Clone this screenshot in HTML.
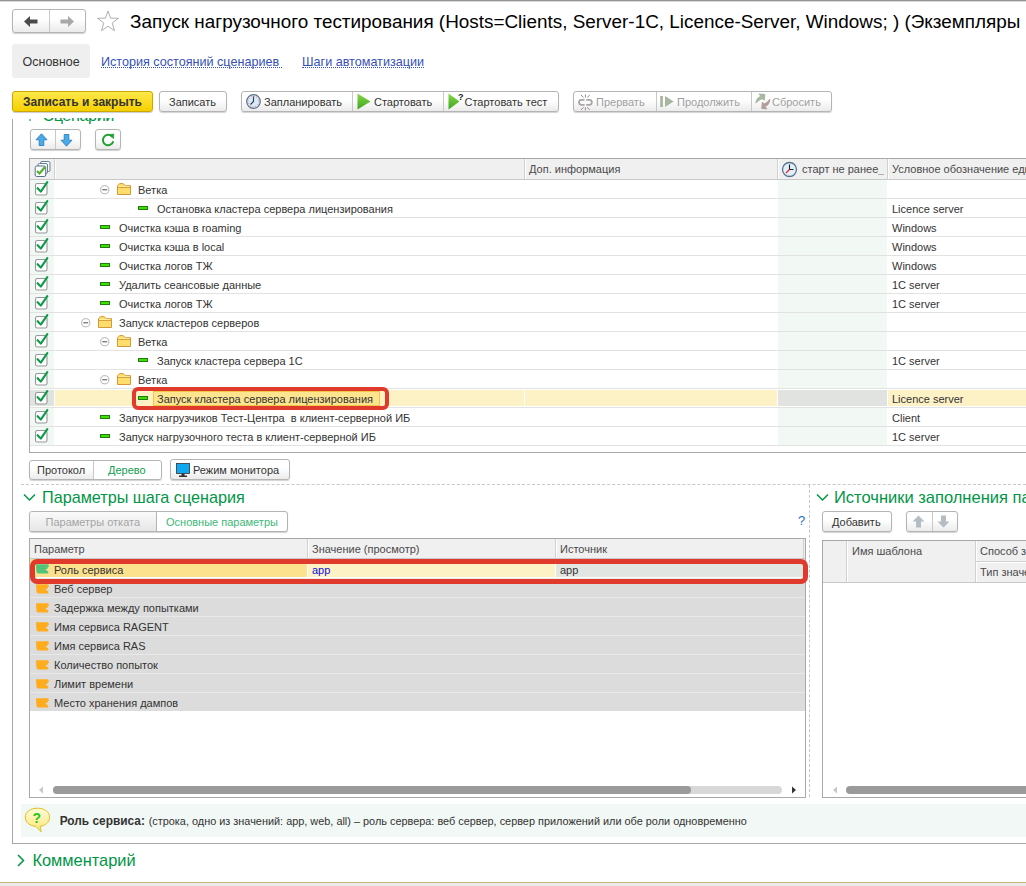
<!DOCTYPE html>
<html><head><meta charset="utf-8">
<style>
*{margin:0;padding:0;box-sizing:border-box}
html,body{width:1026px;height:886px;overflow:hidden;background:#fff;font-family:"Liberation Sans",sans-serif;color:#333}
.a{position:absolute}
.t{position:absolute;white-space:nowrap;line-height:1}
.btn{position:absolute;border:1px solid #b4b4b4;border-radius:3px;background:linear-gradient(#fff 40%,#ebebeb);box-shadow:0 1px 1px rgba(0,0,0,.18)}
.sep{position:absolute;top:0;bottom:0;width:1px;background:#c8c8c8}
.bt{position:absolute;white-space:nowrap;font-size:11px;line-height:1;color:#333}
</style></head><body>
<!-- top border -->
<div class="a" style="left:0;top:0;width:1026px;height:1px;background:#949494"></div><div class="a" style="left:0;top:1px;width:1026px;height:1px;background:#d8d8d8"></div>

<!-- nav buttons -->
<div class="btn" style="left:12px;top:9px;width:74px;height:24px">
  <div class="sep" style="left:36px"></div>
  <svg class="a" style="left:11px;top:6px" width="14" height="11" viewBox="0 0 14 11"><path d="M0 5.5 L6 0 V3.5 H13.5 V7.5 H6 V11 Z" fill="#4a4a4a"/></svg>
  <svg class="a" style="left:47px;top:6px" width="14" height="11" viewBox="0 0 14 11"><path d="M14 5.5 L8 0 V3.5 H0.5 V7.5 H8 V11 Z" fill="#a8a8a8"/></svg>
</div>
<!-- star -->
<svg class="a" style="left:96px;top:10px" width="24" height="22" viewBox="0 0 24 22"><path d="M12 1 L14.6 8.2 L22.5 8.3 L16.2 13 L18.5 20.8 L12 16.2 L5.5 20.8 L7.8 13 L1.5 8.3 L9.4 8.2 Z" fill="none" stroke="#b0b0b0" stroke-width="1"/></svg>
<!-- title -->
<div class="t" style="left:130px;top:12.7px;font-size:18.9px;color:#000">Запуск нагрузочного тестирования (Hosts=Clients, Server-1C, Licence-Server, Windows; ) (Экземпляры</div>

<!-- tabs -->
<div class="a" style="left:12px;top:44px;width:78px;height:34px;background:#efefef;border-radius:3px"></div>
<div class="t" style="left:22.5px;top:55.6px;font-size:12.5px;color:#333">Основное</div>
<div class="t" style="left:101px;top:55.6px;font-size:12.6px;color:#3550b8">История состояний сценариев</div><div class="a" style="left:101px;top:67px;width:181px;height:0;border-top:1px dotted #3550b8"></div>
<div class="t" style="left:302px;top:55.6px;font-size:12.6px;color:#3550b8">Шаги автоматизации</div><div class="a" style="left:302px;top:67px;width:122px;height:0;border-top:1px dotted #3550b8"></div>


<!-- toolbar -->
<div class="a" style="left:12px;top:91px;width:141px;height:21px;border:1px solid #c9a800;border-radius:3px;background:linear-gradient(#ffe94a,#f5cf00);box-shadow:0 1px 1px rgba(0,0,0,.2)"></div>
<div class="t" style="left:23px;top:96.2px;font-size:12px;font-weight:bold;color:#333">Записать и закрыть</div>
<div class="btn" style="left:159px;top:91px;width:68px;height:21px"></div>
<div class="bt" style="left:169px;top:96.5px">Записать</div>

<div class="btn" style="left:241px;top:91px;width:318px;height:21px">
  <div class="sep" style="left:110px"></div>
  <div class="sep" style="left:201px"></div>
</div>
<svg class="a" style="left:246px;top:94px" width="15" height="15" viewBox="0 0 15 15"><circle cx="7.5" cy="7.5" r="6.8" fill="#dbeaf7" stroke="#5b6f86" stroke-width="1.2"/><circle cx="7.5" cy="7.5" r="5.2" fill="none" stroke="#e05050" stroke-width="0.8" stroke-dasharray="0.8 1.9"/><path d="M7.5 2.5 V7.5 L4.5 10.5" stroke="#2a3a5a" stroke-width="1.1" fill="none"/></svg>
<div class="bt" style="left:264px;top:96.5px">Запланировать</div>
<svg class="a" style="left:357px;top:93px" width="14" height="17" viewBox="0 0 14 17"><defs><linearGradient id="pg" x1="0" y1="0" x2="0" y2="1"><stop offset="0" stop-color="#8ad848"/><stop offset="1" stop-color="#3aa520"/></linearGradient></defs><path d="M0.5 0.5 L13.5 8.5 L0.5 16.5 Z" fill="url(#pg)"/></svg>
<div class="bt" style="left:374px;top:96.5px">Стартовать</div>
<svg class="a" style="left:448px;top:93px" width="16" height="17" viewBox="0 0 16 17"><path d="M0.5 0.5 L11.5 8.5 L0.5 16.5 Z" fill="url(#pg)"/><text x="10" y="7" font-family="Liberation Sans" font-size="9" font-weight="bold" fill="#222">?</text></svg>
<div class="bt" style="left:464.5px;top:96.5px">Стартовать тест</div>

<div class="btn" style="left:573px;top:91px;width:259px;height:21px">
  <div class="sep" style="left:82px"></div>
  <div class="sep" style="left:177px"></div>
</div>
<svg class="a" style="left:574px;top:90px" width="26" height="23" viewBox="0 0 26 23"><g fill="none" stroke="#a6a6a6" stroke-width="1.8"><path d="M10.6 9.9 H7.5 A2.45 2.45 0 0 0 7.5 14.8 H10.6"/><path d="M12.3 9.9 H15.4 A2.45 2.45 0 0 1 15.4 14.8 H12.3"/></g><g stroke="#a08a8a" stroke-width="1"><path d="M7 5 L9.5 7.5 M11.4 4.5 V7.5 M15.7 5 L13.3 7.5 M7 20 L9.5 17.3 M11.4 20.3 V17.3 M15.7 20 L13.3 17.3"/></g></svg>
<div class="bt" style="left:596px;top:96.5px;color:#a0a0a0">Прервать</div>
<svg class="a" style="left:656px;top:90px" width="24" height="23" viewBox="0 0 24 23"><rect x="4.2" y="6" width="2.7" height="11" fill="#a9b5a0"/><path d="M9 6 L17.7 11.5 L9 17 Z" fill="#a9b5a0"/></svg>
<div class="bt" style="left:677px;top:96.5px;color:#a0a0a0">Продолжить</div>
<svg class="a" style="left:752px;top:90px" width="22" height="23" viewBox="0 0 22 23"><path d="M4 12.5 Q5.2 7.2 9.6 6.3 L7.3 4.2 L12.7 4.6 L12.2 10 L10.6 8.3 Q7 9.2 4 12.5 Z" fill="#a8b8a0" stroke="#a8b8a0" stroke-width="1.2" stroke-linejoin="round"/><path d="M17.8 9.6 Q17 15.2 12.4 16.3 L14.6 18.6 L9.9 18.3 L10.4 12.5 L12 14.3 Q15.6 13 17.8 9.6 Z" fill="#b29c9c" stroke="#b29c9c" stroke-width="1.2" stroke-linejoin="round"/></svg>
<div class="bt" style="left:772px;top:96.5px;color:#a0a0a0">Сбросить</div>


<div class="a" style="left:12px;top:119px;width:1px;height:725px;background:#a8a8a8"></div>
<div class="a" style="left:12px;top:843px;width:1014px;height:1px;background:#a8a8a8"></div>
<div class="a" style="left:20px;top:118px;width:200px;height:12px;overflow:hidden"><div class="t" style="left:22.4px;top:-11.2px;font-size:16.2px;letter-spacing:-0.4px;color:#009646">Сценарии</div><div class="a" style="left:9px;top:1px;width:2px;height:2px;background:#7cc49c"></div></div>
<div class="btn" style="left:30px;top:129px;width:51px;height:21px"><div class="sep" style="left:24px"></div></div>
<svg class="a" style="left:35px;top:133px" width="13" height="14" viewBox="0 0 13 14"><path d="M6.5 0.8 L12 6.8 H8.8 V12.5 H4.2 V6.8 H1 Z" fill="#4aaae8" stroke="#2b7fc0" stroke-width="0.9" stroke-linejoin="round"/></svg>
<svg class="a" style="left:60px;top:133px" width="13" height="14" viewBox="0 0 13 14"><path d="M6.5 13.2 L12 7.2 H8.8 V1.5 H4.2 V7.2 H1 Z" fill="#4aaae8" stroke="#2b7fc0" stroke-width="0.9" stroke-linejoin="round"/></svg>
<div class="btn" style="left:95px;top:129px;width:26px;height:21px"></div>
<svg class="a" style="left:101px;top:133px" width="14" height="14" viewBox="0 0 14 14"><path d="M11 3.6 A5.2 5.2 0 1 0 12.2 8.2" fill="none" stroke="#22a030" stroke-width="2"/><path d="M8 1.5 L12.8 1 L12.6 5.8 Z" fill="#22a030" stroke="#22a030" stroke-width="0.6" stroke-linejoin="round"/></svg>
<div class="a" style="left:29px;top:158px;width:997px;height:295px;border:1px solid #a8a8a8;border-right:none;background:#fff"></div>
<div class="a" style="left:30px;top:159px;width:996px;height:21px;background:#f0f0f0;border-bottom:1px solid #c8c8c8"></div>
<div class="a" style="left:54px;top:159px;width:1px;height:20px;background:#d0d0d0"></div>
<div class="a" style="left:55px;top:159px;width:1px;height:20px;background:#fff"></div>
<div class="a" style="left:524px;top:159px;width:1px;height:20px;background:#d0d0d0"></div>
<div class="a" style="left:525px;top:159px;width:1px;height:20px;background:#fff"></div>
<div class="a" style="left:777px;top:159px;width:1px;height:20px;background:#d0d0d0"></div>
<div class="a" style="left:778px;top:159px;width:1px;height:20px;background:#fff"></div>
<div class="a" style="left:887px;top:159px;width:1px;height:20px;background:#d0d0d0"></div>
<div class="a" style="left:888px;top:159px;width:1px;height:20px;background:#fff"></div>
<svg class="a" style="left:34px;top:161px" width="17" height="17" viewBox="0 0 17 17"><rect x="6.5" y="0.5" width="9.5" height="10" rx="1.5" fill="#fff" stroke="#56708c" stroke-width="0.9"/><rect x="4" y="2.5" width="9.5" height="10" rx="1.5" fill="#fff" stroke="#56708c" stroke-width="0.9"/><rect x="1.2" y="5" width="10.5" height="10.5" rx="1.5" fill="#fff" stroke="#56708c" stroke-width="1"/><path d="M3 10 L5.5 12.5 L11 6" fill="none" stroke="#50b030" stroke-width="2.2"/></svg>
<div class="t" style="left:529px;top:164.2px;font-size:11px;color:#4a4a4a">Доп. информация</div>
<svg class="a" style="left:781px;top:161px" width="17" height="17" viewBox="0 0 17 17"><circle cx="8.5" cy="8.5" r="7" fill="#e2eef8" stroke="#5a7590" stroke-width="1.3"/><path d="M8.5 3.5 V8.5 H12.5" fill="none" stroke="#222" stroke-width="1.1"/><path d="M8.5 8.5 L5 12" stroke="#e02020" stroke-width="1.1"/></svg>
<div class="t" style="left:802px;top:164.2px;font-size:11px;color:#4a4a4a">старт не ранее</div><div class="a" style="left:878px;top:174px;width:6px;height:1px;background:#b0b0b0"></div>
<div class="t" style="left:892px;top:164.2px;font-size:11px;color:#4a4a4a">Условное обозначение единицы</div>
<div class="a" style="left:30px;top:198px;width:996px;height:1px;background:#e2e2e2"></div>
<div class="a" style="left:30px;top:180px;width:24px;height:18px;background:#f2f8f4"></div>
<div class="a" style="left:778px;top:180px;width:109px;height:18px;background:#f2f8f4"></div>
<svg class="a" style="left:34px;top:181px" width="15" height="15" viewBox="0 0 15 15"><rect x="1.5" y="2.5" width="11.5" height="11.5" rx="1.8" fill="#fff" stroke="#989898" stroke-width="1.1"/><path d="M3.6 7.2 L6.8 10.6 L13.3 1.2" fill="none" stroke="#0c9a48" stroke-width="2.1" stroke-linecap="round" stroke-linejoin="round"/></svg>
<svg class="a" style="left:99.5px;top:185px" width="10" height="10" viewBox="0 0 10 10"><circle cx="4.75" cy="4.75" r="4.1" fill="#fff" stroke="#a8a8a8" stroke-width="0.9"/><path d="M2.3 4.75 H7.2" stroke="#6a6a6a" stroke-width="1.2"/></svg>
<svg class="a" style="left:117px;top:182.5px" width="15" height="13" viewBox="0 0 15 13"><path d="M0.5 2.8 L2.6 0.6 H6.2 L8.2 2.6 H13.5 V11.5 H0.5 Z" fill="#fddd6c" stroke="#d8983a" stroke-width="1" stroke-linejoin="round"/><path d="M0.5 4.4 H13.5" stroke="#d8983a" stroke-width="1"/><path d="M1.5 3.4 H12.5" stroke="#fff0a0" stroke-width="1"/></svg>
<div class="t" style="left:138px;top:184.69px;font-size:11px;color:#333">Ветка</div>
<div class="a" style="left:30px;top:217px;width:996px;height:1px;background:#e2e2e2"></div>
<div class="a" style="left:30px;top:199px;width:24px;height:18px;background:#f2f8f4"></div>
<div class="a" style="left:778px;top:199px;width:109px;height:18px;background:#f2f8f4"></div>
<svg class="a" style="left:34px;top:200px" width="15" height="15" viewBox="0 0 15 15"><rect x="1.5" y="2.5" width="11.5" height="11.5" rx="1.8" fill="#fff" stroke="#989898" stroke-width="1.1"/><path d="M3.6 7.2 L6.8 10.6 L13.3 1.2" fill="none" stroke="#0c9a48" stroke-width="2.1" stroke-linecap="round" stroke-linejoin="round"/></svg>
<div class="a" style="left:138px;top:206px;width:10px;height:4px;background:#3ee000;border:1px solid #1f7a10"></div>
<div class="t" style="left:157px;top:203.69px;font-size:11px;color:#333">Остановка кластера сервера лицензирования</div>
<div class="t" style="left:892px;top:203.69px;font-size:11px;color:#333">Licence server</div>
<div class="a" style="left:30px;top:236px;width:996px;height:1px;background:#e2e2e2"></div>
<div class="a" style="left:30px;top:218px;width:24px;height:18px;background:#f2f8f4"></div>
<div class="a" style="left:778px;top:218px;width:109px;height:18px;background:#f2f8f4"></div>
<svg class="a" style="left:34px;top:219px" width="15" height="15" viewBox="0 0 15 15"><rect x="1.5" y="2.5" width="11.5" height="11.5" rx="1.8" fill="#fff" stroke="#989898" stroke-width="1.1"/><path d="M3.6 7.2 L6.8 10.6 L13.3 1.2" fill="none" stroke="#0c9a48" stroke-width="2.1" stroke-linecap="round" stroke-linejoin="round"/></svg>
<div class="a" style="left:100px;top:225px;width:10px;height:4px;background:#3ee000;border:1px solid #1f7a10"></div>
<div class="t" style="left:119px;top:222.69px;font-size:11px;color:#333">Очистка кэша в roaming</div>
<div class="t" style="left:892px;top:222.69px;font-size:11px;color:#333">Windows</div>
<div class="a" style="left:30px;top:255px;width:996px;height:1px;background:#e2e2e2"></div>
<div class="a" style="left:30px;top:237px;width:24px;height:18px;background:#f2f8f4"></div>
<div class="a" style="left:778px;top:237px;width:109px;height:18px;background:#f2f8f4"></div>
<svg class="a" style="left:34px;top:238px" width="15" height="15" viewBox="0 0 15 15"><rect x="1.5" y="2.5" width="11.5" height="11.5" rx="1.8" fill="#fff" stroke="#989898" stroke-width="1.1"/><path d="M3.6 7.2 L6.8 10.6 L13.3 1.2" fill="none" stroke="#0c9a48" stroke-width="2.1" stroke-linecap="round" stroke-linejoin="round"/></svg>
<div class="a" style="left:100px;top:244px;width:10px;height:4px;background:#3ee000;border:1px solid #1f7a10"></div>
<div class="t" style="left:119px;top:241.69px;font-size:11px;color:#333">Очистка кэша в local</div>
<div class="t" style="left:892px;top:241.69px;font-size:11px;color:#333">Windows</div>
<div class="a" style="left:30px;top:274px;width:996px;height:1px;background:#e2e2e2"></div>
<div class="a" style="left:30px;top:256px;width:24px;height:18px;background:#f2f8f4"></div>
<div class="a" style="left:778px;top:256px;width:109px;height:18px;background:#f2f8f4"></div>
<svg class="a" style="left:34px;top:257px" width="15" height="15" viewBox="0 0 15 15"><rect x="1.5" y="2.5" width="11.5" height="11.5" rx="1.8" fill="#fff" stroke="#989898" stroke-width="1.1"/><path d="M3.6 7.2 L6.8 10.6 L13.3 1.2" fill="none" stroke="#0c9a48" stroke-width="2.1" stroke-linecap="round" stroke-linejoin="round"/></svg>
<div class="a" style="left:100px;top:263px;width:10px;height:4px;background:#3ee000;border:1px solid #1f7a10"></div>
<div class="t" style="left:119px;top:260.69px;font-size:11px;color:#333">Очистка логов ТЖ</div>
<div class="t" style="left:892px;top:260.69px;font-size:11px;color:#333">Windows</div>
<div class="a" style="left:30px;top:293px;width:996px;height:1px;background:#e2e2e2"></div>
<div class="a" style="left:30px;top:275px;width:24px;height:18px;background:#f2f8f4"></div>
<div class="a" style="left:778px;top:275px;width:109px;height:18px;background:#f2f8f4"></div>
<svg class="a" style="left:34px;top:276px" width="15" height="15" viewBox="0 0 15 15"><rect x="1.5" y="2.5" width="11.5" height="11.5" rx="1.8" fill="#fff" stroke="#989898" stroke-width="1.1"/><path d="M3.6 7.2 L6.8 10.6 L13.3 1.2" fill="none" stroke="#0c9a48" stroke-width="2.1" stroke-linecap="round" stroke-linejoin="round"/></svg>
<div class="a" style="left:100px;top:282px;width:10px;height:4px;background:#3ee000;border:1px solid #1f7a10"></div>
<div class="t" style="left:119px;top:279.69px;font-size:11px;color:#333">Удалить сеансовые данные</div>
<div class="t" style="left:892px;top:279.69px;font-size:11px;color:#333">1C server</div>
<div class="a" style="left:30px;top:312px;width:996px;height:1px;background:#e2e2e2"></div>
<div class="a" style="left:30px;top:294px;width:24px;height:18px;background:#f2f8f4"></div>
<div class="a" style="left:778px;top:294px;width:109px;height:18px;background:#f2f8f4"></div>
<svg class="a" style="left:34px;top:295px" width="15" height="15" viewBox="0 0 15 15"><rect x="1.5" y="2.5" width="11.5" height="11.5" rx="1.8" fill="#fff" stroke="#989898" stroke-width="1.1"/><path d="M3.6 7.2 L6.8 10.6 L13.3 1.2" fill="none" stroke="#0c9a48" stroke-width="2.1" stroke-linecap="round" stroke-linejoin="round"/></svg>
<div class="a" style="left:100px;top:301px;width:10px;height:4px;background:#3ee000;border:1px solid #1f7a10"></div>
<div class="t" style="left:119px;top:298.69px;font-size:11px;color:#333">Очистка логов ТЖ</div>
<div class="t" style="left:892px;top:298.69px;font-size:11px;color:#333">1C server</div>
<div class="a" style="left:30px;top:331px;width:996px;height:1px;background:#e2e2e2"></div>
<div class="a" style="left:30px;top:313px;width:24px;height:18px;background:#f2f8f4"></div>
<div class="a" style="left:778px;top:313px;width:109px;height:18px;background:#f2f8f4"></div>
<svg class="a" style="left:34px;top:314px" width="15" height="15" viewBox="0 0 15 15"><rect x="1.5" y="2.5" width="11.5" height="11.5" rx="1.8" fill="#fff" stroke="#989898" stroke-width="1.1"/><path d="M3.6 7.2 L6.8 10.6 L13.3 1.2" fill="none" stroke="#0c9a48" stroke-width="2.1" stroke-linecap="round" stroke-linejoin="round"/></svg>
<svg class="a" style="left:80.5px;top:318px" width="10" height="10" viewBox="0 0 10 10"><circle cx="4.75" cy="4.75" r="4.1" fill="#fff" stroke="#a8a8a8" stroke-width="0.9"/><path d="M2.3 4.75 H7.2" stroke="#6a6a6a" stroke-width="1.2"/></svg>
<svg class="a" style="left:98px;top:315.5px" width="15" height="13" viewBox="0 0 15 13"><path d="M0.5 2.8 L2.6 0.6 H6.2 L8.2 2.6 H13.5 V11.5 H0.5 Z" fill="#fddd6c" stroke="#d8983a" stroke-width="1" stroke-linejoin="round"/><path d="M0.5 4.4 H13.5" stroke="#d8983a" stroke-width="1"/><path d="M1.5 3.4 H12.5" stroke="#fff0a0" stroke-width="1"/></svg>
<div class="t" style="left:119px;top:317.69px;font-size:11px;color:#333">Запуск кластеров серверов</div>
<div class="a" style="left:30px;top:350px;width:996px;height:1px;background:#e2e2e2"></div>
<div class="a" style="left:30px;top:332px;width:24px;height:18px;background:#f2f8f4"></div>
<div class="a" style="left:778px;top:332px;width:109px;height:18px;background:#f2f8f4"></div>
<svg class="a" style="left:34px;top:333px" width="15" height="15" viewBox="0 0 15 15"><rect x="1.5" y="2.5" width="11.5" height="11.5" rx="1.8" fill="#fff" stroke="#989898" stroke-width="1.1"/><path d="M3.6 7.2 L6.8 10.6 L13.3 1.2" fill="none" stroke="#0c9a48" stroke-width="2.1" stroke-linecap="round" stroke-linejoin="round"/></svg>
<svg class="a" style="left:99.5px;top:337px" width="10" height="10" viewBox="0 0 10 10"><circle cx="4.75" cy="4.75" r="4.1" fill="#fff" stroke="#a8a8a8" stroke-width="0.9"/><path d="M2.3 4.75 H7.2" stroke="#6a6a6a" stroke-width="1.2"/></svg>
<svg class="a" style="left:117px;top:334.5px" width="15" height="13" viewBox="0 0 15 13"><path d="M0.5 2.8 L2.6 0.6 H6.2 L8.2 2.6 H13.5 V11.5 H0.5 Z" fill="#fddd6c" stroke="#d8983a" stroke-width="1" stroke-linejoin="round"/><path d="M0.5 4.4 H13.5" stroke="#d8983a" stroke-width="1"/><path d="M1.5 3.4 H12.5" stroke="#fff0a0" stroke-width="1"/></svg>
<div class="t" style="left:138px;top:336.69px;font-size:11px;color:#333">Ветка</div>
<div class="a" style="left:30px;top:369px;width:996px;height:1px;background:#e2e2e2"></div>
<div class="a" style="left:30px;top:351px;width:24px;height:18px;background:#f2f8f4"></div>
<div class="a" style="left:778px;top:351px;width:109px;height:18px;background:#f2f8f4"></div>
<svg class="a" style="left:34px;top:352px" width="15" height="15" viewBox="0 0 15 15"><rect x="1.5" y="2.5" width="11.5" height="11.5" rx="1.8" fill="#fff" stroke="#989898" stroke-width="1.1"/><path d="M3.6 7.2 L6.8 10.6 L13.3 1.2" fill="none" stroke="#0c9a48" stroke-width="2.1" stroke-linecap="round" stroke-linejoin="round"/></svg>
<div class="a" style="left:138px;top:358px;width:10px;height:4px;background:#3ee000;border:1px solid #1f7a10"></div>
<div class="t" style="left:157px;top:355.69px;font-size:11px;color:#333">Запуск кластера сервера 1С</div>
<div class="t" style="left:892px;top:355.69px;font-size:11px;color:#333">1C server</div>
<div class="a" style="left:30px;top:388px;width:996px;height:1px;background:#e2e2e2"></div>
<div class="a" style="left:30px;top:370px;width:24px;height:18px;background:#f2f8f4"></div>
<div class="a" style="left:778px;top:370px;width:109px;height:18px;background:#f2f8f4"></div>
<svg class="a" style="left:34px;top:371px" width="15" height="15" viewBox="0 0 15 15"><rect x="1.5" y="2.5" width="11.5" height="11.5" rx="1.8" fill="#fff" stroke="#989898" stroke-width="1.1"/><path d="M3.6 7.2 L6.8 10.6 L13.3 1.2" fill="none" stroke="#0c9a48" stroke-width="2.1" stroke-linecap="round" stroke-linejoin="round"/></svg>
<svg class="a" style="left:99.5px;top:375px" width="10" height="10" viewBox="0 0 10 10"><circle cx="4.75" cy="4.75" r="4.1" fill="#fff" stroke="#a8a8a8" stroke-width="0.9"/><path d="M2.3 4.75 H7.2" stroke="#6a6a6a" stroke-width="1.2"/></svg>
<svg class="a" style="left:117px;top:372.5px" width="15" height="13" viewBox="0 0 15 13"><path d="M0.5 2.8 L2.6 0.6 H6.2 L8.2 2.6 H13.5 V11.5 H0.5 Z" fill="#fddd6c" stroke="#d8983a" stroke-width="1" stroke-linejoin="round"/><path d="M0.5 4.4 H13.5" stroke="#d8983a" stroke-width="1"/><path d="M1.5 3.4 H12.5" stroke="#fff0a0" stroke-width="1"/></svg>
<div class="t" style="left:138px;top:374.69px;font-size:11px;color:#333">Ветка</div>
<div class="a" style="left:30px;top:407px;width:996px;height:1px;background:#e2e2e2"></div>
<div class="a" style="left:30px;top:390px;width:24px;height:16px;background:#e0e4e1"></div>
<div class="a" style="left:55px;top:390px;width:469px;height:16px;background:#fdf1c6"></div>
<div class="a" style="left:525px;top:390px;width:252px;height:16px;background:#fdf1c6"></div>
<div class="a" style="left:778px;top:390px;width:109px;height:16px;background:#e1e3e0"></div>
<div class="a" style="left:888px;top:390px;width:138px;height:16px;background:#fdf1c6"></div>
<svg class="a" style="left:34px;top:390px" width="15" height="15" viewBox="0 0 15 15"><rect x="1.5" y="2.5" width="11.5" height="11.5" rx="1.8" fill="#fff" stroke="#989898" stroke-width="1.1"/><path d="M3.6 7.2 L6.8 10.6 L13.3 1.2" fill="none" stroke="#0c9a48" stroke-width="2.1" stroke-linecap="round" stroke-linejoin="round"/></svg>
<div class="a" style="left:138px;top:396px;width:10px;height:4px;background:#3ee000;border:1px solid #1f7a10"></div>
<div class="a" style="left:153px;top:391px;width:227px;height:15px;background:#fde48e;border:1px solid #f3c645"></div>
<div class="t" style="left:157px;top:393.69px;font-size:11px;color:#333">Запуск кластера сервера лицензирования</div>
<div class="t" style="left:892px;top:393.69px;font-size:11px;color:#333">Licence server</div>
<div class="a" style="left:30px;top:426px;width:996px;height:1px;background:#e2e2e2"></div>
<div class="a" style="left:30px;top:408px;width:24px;height:18px;background:#f2f8f4"></div>
<div class="a" style="left:778px;top:408px;width:109px;height:18px;background:#f2f8f4"></div>
<svg class="a" style="left:34px;top:409px" width="15" height="15" viewBox="0 0 15 15"><rect x="1.5" y="2.5" width="11.5" height="11.5" rx="1.8" fill="#fff" stroke="#989898" stroke-width="1.1"/><path d="M3.6 7.2 L6.8 10.6 L13.3 1.2" fill="none" stroke="#0c9a48" stroke-width="2.1" stroke-linecap="round" stroke-linejoin="round"/></svg>
<div class="a" style="left:100px;top:415px;width:10px;height:4px;background:#3ee000;border:1px solid #1f7a10"></div>
<div class="t" style="left:119px;top:412.69px;font-size:11px;color:#333">Запуск нагрузчиков Тест-Центра&nbsp; в клиент-серверной ИБ</div>
<div class="t" style="left:892px;top:412.69px;font-size:11px;color:#333">Client</div>
<div class="a" style="left:30px;top:445px;width:996px;height:1px;background:#e2e2e2"></div>
<div class="a" style="left:30px;top:427px;width:24px;height:18px;background:#f2f8f4"></div>
<div class="a" style="left:778px;top:427px;width:109px;height:18px;background:#f2f8f4"></div>
<svg class="a" style="left:34px;top:428px" width="15" height="15" viewBox="0 0 15 15"><rect x="1.5" y="2.5" width="11.5" height="11.5" rx="1.8" fill="#fff" stroke="#989898" stroke-width="1.1"/><path d="M3.6 7.2 L6.8 10.6 L13.3 1.2" fill="none" stroke="#0c9a48" stroke-width="2.1" stroke-linecap="round" stroke-linejoin="round"/></svg>
<div class="a" style="left:100px;top:434px;width:10px;height:4px;background:#3ee000;border:1px solid #1f7a10"></div>
<div class="t" style="left:119px;top:431.69px;font-size:11px;color:#333">Запуск нагрузочного теста в клиент-серверной ИБ</div>
<div class="t" style="left:892px;top:431.69px;font-size:11px;color:#333">1C server</div>
<div class="a" style="left:132px;top:387px;width:257px;height:23px;border:4px solid #e03a2c;border-radius:6px"></div>
<div class="btn" style="left:29px;top:460px;width:133px;height:20px"><div class="sep" style="left:63px"></div><div class="a" style="left:64px;top:0;right:0;bottom:0;background:#fff;border-radius:0 3px 3px 0"></div></div>
<div class="bt" style="left:37px;top:465px">Протокол</div>
<div class="bt" style="left:108px;top:465px;color:#10a050">Дерево</div>
<div class="btn" style="left:170px;top:459px;width:120px;height:21px"></div>
<svg class="a" style="left:176px;top:463px" width="16" height="16" viewBox="0 0 16 16"><rect x="0.5" y="0.5" width="13" height="10" fill="#10a8f0" stroke="#333" stroke-width="0.8"/><rect x="5.5" y="10.5" width="3" height="2.5" fill="#333"/><rect x="3" y="12.5" width="8" height="1.5" fill="#333"/></svg>
<div class="bt" style="left:193px;top:465px">Режим монитора</div>
<div class="a" style="left:21px;top:484px;width:1005px;height:0;border-top:1px dashed #c8c8c8"></div>
<div class="a" style="left:809px;top:485px;width:0;height:312px;border-left:1px dashed #c8c8c8"></div>
<svg class="a" style="left:23px;top:493px" width="13" height="9" viewBox="0 0 13 9"><path d="M1 1.5 L6.5 7 L12 1.5" fill="none" stroke="#009646" stroke-width="1.5"/></svg>
<div class="t" style="left:42px;top:489.1px;font-size:16.2px;color:#009646">Параметры шага сценария</div>
<div class="btn" style="left:29px;top:511px;width:259px;height:21px;background:#fff"><div class="a" style="left:0;top:0;width:126px;height:19px;background:linear-gradient(#fafafa,#e6e6e6);border-radius:3px 0 0 3px"></div><div class="sep" style="left:126px;background:#b4b4b4"></div></div>
<div class="bt" style="left:45.5px;top:516.5px;color:#a4a4a4">Параметры отката</div>
<div class="bt" style="left:166px;top:516.5px;color:#3cb878">Основные параметры</div>
<div class="t" style="left:798px;top:514px;font-size:13px;color:#1a70c0">?</div>
<div class="a" style="left:29px;top:538px;width:777px;height:260px;border:1px solid #a8a8a8;background:#fff"></div>
<div class="a" style="left:30px;top:539px;width:775px;height:20px;background:#f0f0f0;border-bottom:1px solid #c8c8c8"></div>
<div class="a" style="left:307px;top:539px;width:1px;height:19px;background:#d0d0d0"></div>
<div class="a" style="left:308px;top:539px;width:1px;height:19px;background:#fff"></div>
<div class="a" style="left:555px;top:539px;width:1px;height:19px;background:#d0d0d0"></div>
<div class="a" style="left:556px;top:539px;width:1px;height:19px;background:#fff"></div>
<div class="a" style="left:803px;top:539px;width:1px;height:19px;background:#d0d0d0"></div>
<div class="t" style="left:34px;top:543.7px;font-size:11px;color:#4a4a4a">Параметр</div>
<div class="t" style="left:312px;top:543.7px;font-size:11px;color:#4a4a4a">Значение (просмотр)</div>
<div class="t" style="left:560px;top:543.7px;font-size:11px;color:#4a4a4a">Источник</div>
<div class="a" style="left:30px;top:559px;width:277px;height:18px;background:#fde28e"></div>
<div class="a" style="left:308px;top:559px;width:247px;height:18px;background:#fdf1c6"></div>
<div class="a" style="left:556px;top:559px;width:249px;height:18px;background:#e2e6e2"></div>
<svg class="a" style="left:36px;top:564px" width="14" height="10" viewBox="0 0 14 10"><path d="M0 0.3 H12.2 L13 2.6 L11.6 3.4 L11.6 4.8 L9.3 5.4 L12.3 7.6 L12.2 9.6 H2 L0.6 8.4 L0.2 5 Z" fill="#52c47a"/></svg>
<div class="t" style="left:312px;top:565.19px;font-size:11px;color:#1010e0">app</div>
<div class="t" style="left:560px;top:565.19px;font-size:11px;color:#333">app</div>
<div class="t" style="left:54px;top:565.19px;font-size:11px;color:#333">Роль сервиса</div>
<div class="a" style="left:30px;top:579px;width:775px;height:18px;background:#dcdcdc"></div>
<div class="a" style="left:30px;top:578px;width:775px;height:1px;background:#e8e8e8"></div>
<svg class="a" style="left:36px;top:584px" width="14" height="10" viewBox="0 0 14 10"><path d="M0 0.3 H12.2 L13 2.6 L11.6 3.4 L11.6 4.8 L9.3 5.4 L12.3 7.6 L12.2 9.6 H2 L0.6 8.4 L0.2 5 Z" fill="#ffac1e"/></svg>
<div class="t" style="left:54px;top:584.19px;font-size:11px;color:#333">Веб сервер</div>
<div class="a" style="left:30px;top:598px;width:775px;height:18px;background:#dcdcdc"></div>
<div class="a" style="left:30px;top:597px;width:775px;height:1px;background:#e8e8e8"></div>
<svg class="a" style="left:36px;top:603px" width="14" height="10" viewBox="0 0 14 10"><path d="M0 0.3 H12.2 L13 2.6 L11.6 3.4 L11.6 4.8 L9.3 5.4 L12.3 7.6 L12.2 9.6 H2 L0.6 8.4 L0.2 5 Z" fill="#ffac1e"/></svg>
<div class="t" style="left:54px;top:603.19px;font-size:11px;color:#333">Задержка между попытками</div>
<div class="a" style="left:30px;top:617px;width:775px;height:18px;background:#dcdcdc"></div>
<div class="a" style="left:30px;top:616px;width:775px;height:1px;background:#e8e8e8"></div>
<svg class="a" style="left:36px;top:622px" width="14" height="10" viewBox="0 0 14 10"><path d="M0 0.3 H12.2 L13 2.6 L11.6 3.4 L11.6 4.8 L9.3 5.4 L12.3 7.6 L12.2 9.6 H2 L0.6 8.4 L0.2 5 Z" fill="#ffac1e"/></svg>
<div class="t" style="left:54px;top:622.19px;font-size:11px;color:#333">Имя сервиса RAGENT</div>
<div class="a" style="left:30px;top:636px;width:775px;height:18px;background:#dcdcdc"></div>
<div class="a" style="left:30px;top:635px;width:775px;height:1px;background:#e8e8e8"></div>
<svg class="a" style="left:36px;top:641px" width="14" height="10" viewBox="0 0 14 10"><path d="M0 0.3 H12.2 L13 2.6 L11.6 3.4 L11.6 4.8 L9.3 5.4 L12.3 7.6 L12.2 9.6 H2 L0.6 8.4 L0.2 5 Z" fill="#ffac1e"/></svg>
<div class="t" style="left:54px;top:641.19px;font-size:11px;color:#333">Имя сервиса RAS</div>
<div class="a" style="left:30px;top:655px;width:775px;height:18px;background:#dcdcdc"></div>
<div class="a" style="left:30px;top:654px;width:775px;height:1px;background:#e8e8e8"></div>
<svg class="a" style="left:36px;top:660px" width="14" height="10" viewBox="0 0 14 10"><path d="M0 0.3 H12.2 L13 2.6 L11.6 3.4 L11.6 4.8 L9.3 5.4 L12.3 7.6 L12.2 9.6 H2 L0.6 8.4 L0.2 5 Z" fill="#ffac1e"/></svg>
<div class="t" style="left:54px;top:660.19px;font-size:11px;color:#333">Количество попыток</div>
<div class="a" style="left:30px;top:674px;width:775px;height:18px;background:#dcdcdc"></div>
<div class="a" style="left:30px;top:673px;width:775px;height:1px;background:#e8e8e8"></div>
<svg class="a" style="left:36px;top:679px" width="14" height="10" viewBox="0 0 14 10"><path d="M0 0.3 H12.2 L13 2.6 L11.6 3.4 L11.6 4.8 L9.3 5.4 L12.3 7.6 L12.2 9.6 H2 L0.6 8.4 L0.2 5 Z" fill="#ffac1e"/></svg>
<div class="t" style="left:54px;top:679.19px;font-size:11px;color:#333">Лимит времени</div>
<div class="a" style="left:30px;top:693px;width:775px;height:18px;background:#dcdcdc"></div>
<div class="a" style="left:30px;top:692px;width:775px;height:1px;background:#e8e8e8"></div>
<svg class="a" style="left:36px;top:698px" width="14" height="10" viewBox="0 0 14 10"><path d="M0 0.3 H12.2 L13 2.6 L11.6 3.4 L11.6 4.8 L9.3 5.4 L12.3 7.6 L12.2 9.6 H2 L0.6 8.4 L0.2 5 Z" fill="#ffac1e"/></svg>
<div class="t" style="left:54px;top:698.19px;font-size:11px;color:#333">Место хранения дампов</div>
<div class="a" style="left:30px;top:559px;width:778px;height:25px;border:5px solid #e03a2c;border-radius:7px"></div>
<svg class="a" style="left:38px;top:786px" width="6" height="8" viewBox="0 0 6 8"><path d="M5 0.5 V7.5 L1 4 Z" fill="#c8c8c8"/></svg>
<div class="a" style="left:53px;top:786px;width:729px;height:8px;border-radius:4px;background:#d8d8d8"></div>
<div class="a" style="left:53px;top:786px;width:638px;height:8px;border-radius:4px;background:#9a9a9a"></div>
<svg class="a" style="left:791px;top:786px" width="6" height="8" viewBox="0 0 6 8"><path d="M1 0.5 V7.5 L5 4 Z" fill="#333"/></svg>
<svg class="a" style="left:816px;top:493px" width="13" height="9" viewBox="0 0 13 9"><path d="M1 1.5 L6.5 7 L12 1.5" fill="none" stroke="#009646" stroke-width="1.5"/></svg>
<div class="t" style="left:834px;top:488.9px;font-size:16.5px;color:#009646">Источники заполнения параметров</div>
<div class="btn" style="left:822px;top:511px;width:70px;height:21px"></div>
<div class="bt" style="left:832px;top:516.5px">Добавить</div>
<div class="btn" style="left:906px;top:511px;width:52px;height:21px"><div class="sep" style="left:25px"></div></div>
<svg class="a" style="left:912px;top:515px" width="13" height="13" viewBox="0 0 13 13"><path d="M6.5 0.5 L12.5 6.5 H9 V12.5 H4 V6.5 H0.5 Z" fill="#b4bcc4"/></svg>
<svg class="a" style="left:937px;top:515px" width="13" height="13" viewBox="0 0 13 13"><path d="M6.5 12.5 L12.5 6.5 H9 V0.5 H4 V6.5 H0.5 Z" fill="#b4bcc4"/></svg>
<div class="a" style="left:822px;top:540px;width:204px;height:258px;border:1px solid #a8a8a8;border-right:none;background:#fff"></div>
<div class="a" style="left:823px;top:541px;width:203px;height:42px;background:#f0f0f0;border-bottom:1px solid #c8c8c8"></div>
<div class="a" style="left:846px;top:541px;width:1px;height:41px;background:#d0d0d0"></div>
<div class="a" style="left:847px;top:541px;width:1px;height:41px;background:#fff"></div>
<div class="a" style="left:975px;top:541px;width:1px;height:41px;background:#d0d0d0"></div>
<div class="a" style="left:976px;top:541px;width:1px;height:41px;background:#fff"></div>
<div class="a" style="left:976px;top:561px;width:50px;height:1px;background:#d0d0d0"></div>
<div class="a" style="left:976px;top:562px;width:50px;height:1px;background:#fff"></div>
<div class="t" style="left:852px;top:545.7px;font-size:11px;color:#4a4a4a">Имя шаблона</div>
<div class="t" style="left:980px;top:545.7px;font-size:11px;color:#4a4a4a">Способ заполнения</div>
<div class="t" style="left:980px;top:566.7px;font-size:11px;color:#4a4a4a">Тип значения</div>
<svg class="a" style="left:832px;top:786px" width="6" height="8" viewBox="0 0 6 8"><path d="M5 0.5 V7.5 L1 4 Z" fill="#c8c8c8"/></svg>
<div class="a" style="left:846px;top:786px;width:200px;height:8px;border-radius:4px;background:#9a9a9a"></div>
<div class="a" style="left:21px;top:804px;width:1005px;height:33px;background:#f2f8f5"></div>
<svg class="a" style="left:24px;top:807px" width="28" height="26" viewBox="0 0 28 26"><defs><linearGradient id="hg" x1="0" y1="0" x2="0" y2="1"><stop offset="0" stop-color="#fffbd8"/><stop offset="1" stop-color="#ffe676"/></linearGradient></defs><path d="M13.5 1.2 C20.6 1.2 25.6 4.9 25.6 10.2 C25.6 15.3 21.2 18.8 16 19.3 L17.2 24.8 L11.8 19.4 C5.8 19 1.3 15.4 1.3 10.2 C1.3 4.9 6.4 1.2 13.5 1.2 Z" fill="url(#hg)" stroke="#dcc020" stroke-width="1"/><text x="8.6" y="16" font-family="Liberation Sans" font-size="14" font-weight="bold" fill="#1ec81e">?</text></svg>
<div class="t" style="left:59.7px;top:816.4px;font-size:11.9px;font-weight:bold;color:#333">Роль сервиса:</div>
<div class="t" style="left:148.7px;top:816.2px;font-size:10.9px;color:#333">(строка, одно из значений: app, web, all) – роль сервера: веб сервер, сервер приложений или обе роли одновременно</div>
<svg class="a" style="left:16px;top:854px" width="10" height="13" viewBox="0 0 10 13"><path d="M2 1 L7.5 6.5 L2 12" fill="none" stroke="#009646" stroke-width="1.5"/></svg>
<div class="t" style="left:32.4px;top:852.4px;font-size:16.4px;color:#009646">Комментарий</div>
<div class="a" style="left:0;top:882px;width:1026px;height:1px;background:#c6b86e"></div>
<div class="a" style="left:0;top:883px;width:1026px;height:3px;background:#ebebed"></div>
</body></html>
